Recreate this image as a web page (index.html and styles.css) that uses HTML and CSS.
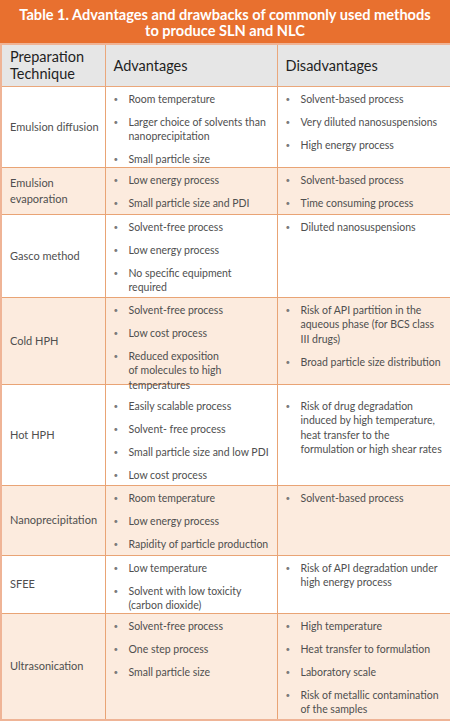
FILE: index.html
```html
<!DOCTYPE html>
<html lang="en">
<head>
  <meta charset="UTF-8">
  <meta name="viewport" content="width=device-width, initial-scale=1.0">
  <title>Table 1. Advantages and drawbacks of SLN and NLC methods</title>
  <link rel="stylesheet" href="styles.css">
</head>
<body>
  <div id="sheet">
    <div class="caption">Table 1. Advantages and drawbacks of commonly used methods<br>to produce SLN and NLC</div>
    <table class="methods">
      <colgroup>
        <col class="col-method">
        <col class="col-pro">
        <col class="col-con">
      </colgroup>
      <thead>
        <tr>
          <th>Preparation<br>Technique</th>
          <th>Advantages</th>
          <th>Disadvantages</th>
        </tr>
      </thead>
      <tbody>
        <tr class="row-diffusion">
          <td class="method">Emulsion diffusion</td>
          <td><ul>
            <li>Room temperature</li>
            <li>Larger choice of solvents than<br>nanoprecipitation</li>
            <li>Small particle size</li>
          </ul></td>
          <td><ul>
            <li>Solvent-based process</li>
            <li>Very diluted nanosuspensions</li>
            <li>High energy process</li>
          </ul></td>
        </tr>
        <tr class="shaded row-evaporation">
          <td class="method">Emulsion<br>evaporation</td>
          <td><ul>
            <li>Low energy process</li>
            <li>Small particle size and PDI</li>
          </ul></td>
          <td><ul>
            <li>Solvent-based process</li>
            <li>Time consuming process</li>
          </ul></td>
        </tr>
        <tr class="row-gasco">
          <td class="method">Gasco method</td>
          <td><ul>
            <li>Solvent-free process</li>
            <li>Low energy process</li>
            <li>No specific equipment<br>required</li>
          </ul></td>
          <td><ul>
            <li>Diluted nanosuspensions</li>
          </ul></td>
        </tr>
        <tr class="shaded row-cold">
          <td class="method">Cold HPH</td>
          <td><ul>
            <li>Solvent-free process</li>
            <li>Low cost process</li>
            <li>Reduced exposition<br>of molecules to high<br>temperatures</li>
          </ul></td>
          <td><ul>
            <li>Risk of API partition in the<br>aqueous phase (for BCS class<br>III drugs)</li>
            <li>Broad particle size distribution</li>
          </ul></td>
        </tr>
        <tr class="row-hot">
          <td class="method">Hot HPH</td>
          <td><ul>
            <li>Easily scalable process</li>
            <li>Solvent- free process</li>
            <li>Small particle size and low PDI</li>
            <li>Low cost process</li>
          </ul></td>
          <td><ul>
            <li>Risk of drug degradation<br>induced by high temperature,<br>heat transfer to the<br>formulation or high shear rates</li>
          </ul></td>
        </tr>
        <tr class="shaded row-nano">
          <td class="method">Nanoprecipitation</td>
          <td><ul>
            <li>Room temperature</li>
            <li>Low energy process</li>
            <li>Rapidity of particle production</li>
          </ul></td>
          <td><ul>
            <li>Solvent-based process</li>
          </ul></td>
        </tr>
        <tr class="row-sfee">
          <td class="method">SFEE</td>
          <td><ul>
            <li>Low temperature</li>
            <li>Solvent with low toxicity<br>(carbon dioxide)</li>
          </ul></td>
          <td><ul>
            <li>Risk of API degradation under<br>high energy process</li>
          </ul></td>
        </tr>
        <tr class="shaded row-ultra">
          <td class="method">Ultrasonication</td>
          <td><ul>
            <li>Solvent-free process</li>
            <li>One step process</li>
            <li>Small particle size</li>
          </ul></td>
          <td><ul>
            <li>High temperature</li>
            <li>Heat transfer to formulation</li>
            <li>Laboratory scale</li>
            <li>Risk of metallic contamination<br>of the samples</li>
          </ul></td>
        </tr>
      </tbody>
    </table>
  </div>
</body>
</html>
```

FILE: styles.css
```css
* {
  margin:0;
  padding:0;
  box-sizing:border-box;
}

body {
  background:#ffffff;
  font-family:Lato, "Open Sans", sans-serif;
  color:#4f4f4f;
}

#sheet {
  width:450px;
}

.caption {
  height:43px;
  padding-top:7px;
  background:#e8702f;
  color:#ffffff;
  font-weight:bold;
  font-size:14.6px;
  line-height:16px;
  text-align:center;
}

.methods {
  width:450px;
  border-collapse:collapse;
  table-layout:fixed;
  border:2px solid #efb496;
}

.col-method { width:104px; }
.col-pro { width:172px; }
.col-con { width:174px; }

.methods thead tr { height:42px; }

.methods th {
  padding:0 8px;
  background:#e6e6e6;
  color:#1f1f1f;
  font-weight:normal;
  font-size:14.5px;
  line-height:17px;
  text-align:left;
  vertical-align:middle;
  border:1px solid #eaa77b;
}

.methods td {
  padding:5px 4px 0 8px;
  font-size:10.5px;
  line-height:14.5px;
  vertical-align:top;
  border:1px solid #e9a475;
}

.methods td.method {
  vertical-align:middle;
  padding-top:0;
  font-size:11px;
  line-height:16px;
}

tr.shaded td {
  background:#fcebde;
}

/* row heights follow the printed table */
.row-diffusion { height:81px; }
.row-evaporation { height:47px; }
.row-gasco { height:83px; }
.row-cold { height:87px; }
.row-hot { height:101px; }
.row-nano { height:70px; }
.row-sfee { height:58px; }
.row-ultra { height:107px; }

.row-cold li:last-child { margin-bottom:-9px; }
.row-hot td { padding-top:14px; }

ul {
  list-style:none;
}

li {
  position:relative;
  padding-left:15px;
  margin-bottom:8.5px;
  white-space:nowrap;
}

li:last-child {
  margin-bottom:0;
}

li::before {
  content:"•";
  position:absolute;
  left:0;
  top:0;
  font-size:8px;
  color:#7a7a7a;
}
```
